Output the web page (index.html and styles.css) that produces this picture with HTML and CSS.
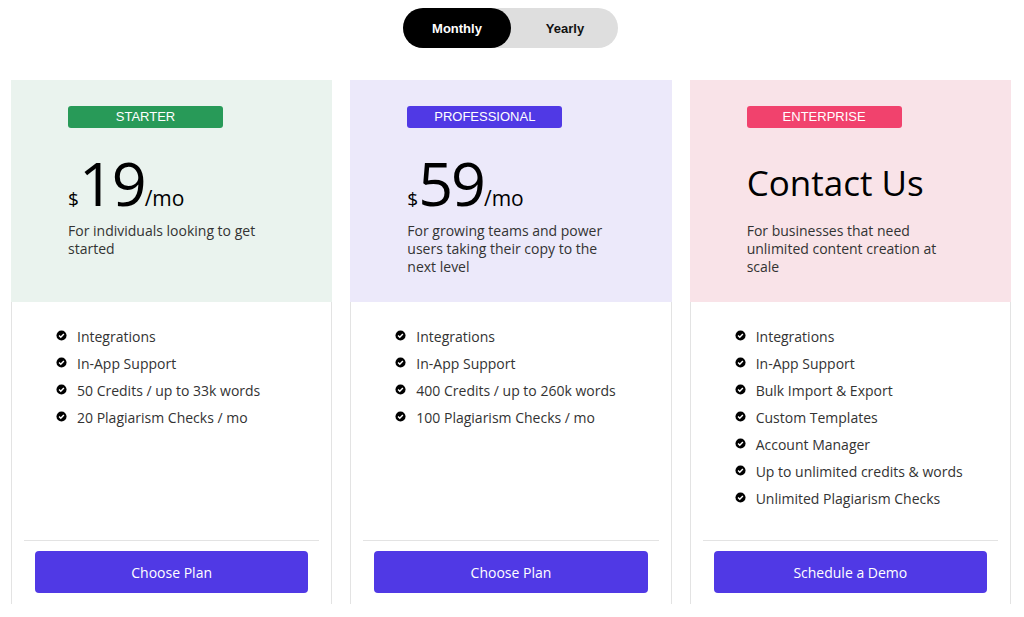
FILE: index.html
```html
<!DOCTYPE html>
<html lang="en">
<head>
    <meta charset="UTF-8">
    <title>Pricing</title>
    <link rel="stylesheet" href="styles.css">
</head>
<body>
    <div class="toggle">
        <button class="toggle-btn active">Monthly</button>
        <button class="toggle-btn">Yearly</button>
    </div>

    <div class="plans">
        <div class="plan starter">
            <div class="plan-head">
                <span class="badge">STARTER</span>
                <div class="price"><span class="cur">$</span><span class="amount">19</span><span class="per">/mo</span></div>
                <p class="desc">For individuals looking to get started</p>
            </div>
            <div class="plan-body">
                <ul class="features">
                    <li><svg class="check" viewBox="0 0 12 12"><circle cx="6" cy="6" r="5.5"/><path d="M3.4 6.1l1.8 1.8 3.4-3.5"/></svg>Integrations</li>
                    <li><svg class="check" viewBox="0 0 12 12"><circle cx="6" cy="6" r="5.5"/><path d="M3.4 6.1l1.8 1.8 3.4-3.5"/></svg>In-App Support</li>
                    <li><svg class="check" viewBox="0 0 12 12"><circle cx="6" cy="6" r="5.5"/><path d="M3.4 6.1l1.8 1.8 3.4-3.5"/></svg>50 Credits / up to 33k words</li>
                    <li><svg class="check" viewBox="0 0 12 12"><circle cx="6" cy="6" r="5.5"/><path d="M3.4 6.1l1.8 1.8 3.4-3.5"/></svg>20 Plagiarism Checks / mo</li>
                </ul>
                <div class="plan-foot">
                    <button class="plan-btn">Choose Plan</button>
                </div>
            </div>
        </div>

        <div class="plan pro">
            <div class="plan-head">
                <span class="badge">PROFESSIONAL</span>
                <div class="price"><span class="cur">$</span><span class="amount">59</span><span class="per">/mo</span></div>
                <p class="desc">For growing teams and power users taking their copy to the next level</p>
            </div>
            <div class="plan-body">
                <ul class="features">
                    <li><svg class="check" viewBox="0 0 12 12"><circle cx="6" cy="6" r="5.5"/><path d="M3.4 6.1l1.8 1.8 3.4-3.5"/></svg>Integrations</li>
                    <li><svg class="check" viewBox="0 0 12 12"><circle cx="6" cy="6" r="5.5"/><path d="M3.4 6.1l1.8 1.8 3.4-3.5"/></svg>In-App Support</li>
                    <li><svg class="check" viewBox="0 0 12 12"><circle cx="6" cy="6" r="5.5"/><path d="M3.4 6.1l1.8 1.8 3.4-3.5"/></svg>400 Credits / up to 260k words</li>
                    <li><svg class="check" viewBox="0 0 12 12"><circle cx="6" cy="6" r="5.5"/><path d="M3.4 6.1l1.8 1.8 3.4-3.5"/></svg>100 Plagiarism Checks / mo</li>
                </ul>
                <div class="plan-foot">
                    <button class="plan-btn">Choose Plan</button>
                </div>
            </div>
        </div>

        <div class="plan enterprise">
            <div class="plan-head">
                <span class="badge">ENTERPRISE</span>
                <div class="contact">Contact Us</div>
                <p class="desc">For businesses that need unlimited content creation at scale</p>
            </div>
            <div class="plan-body">
                <ul class="features">
                    <li><svg class="check" viewBox="0 0 12 12"><circle cx="6" cy="6" r="5.5"/><path d="M3.4 6.1l1.8 1.8 3.4-3.5"/></svg>Integrations</li>
                    <li><svg class="check" viewBox="0 0 12 12"><circle cx="6" cy="6" r="5.5"/><path d="M3.4 6.1l1.8 1.8 3.4-3.5"/></svg>In-App Support</li>
                    <li><svg class="check" viewBox="0 0 12 12"><circle cx="6" cy="6" r="5.5"/><path d="M3.4 6.1l1.8 1.8 3.4-3.5"/></svg>Bulk Import &amp; Export</li>
                    <li><svg class="check" viewBox="0 0 12 12"><circle cx="6" cy="6" r="5.5"/><path d="M3.4 6.1l1.8 1.8 3.4-3.5"/></svg>Custom Templates</li>
                    <li><svg class="check" viewBox="0 0 12 12"><circle cx="6" cy="6" r="5.5"/><path d="M3.4 6.1l1.8 1.8 3.4-3.5"/></svg>Account Manager</li>
                    <li><svg class="check" viewBox="0 0 12 12"><circle cx="6" cy="6" r="5.5"/><path d="M3.4 6.1l1.8 1.8 3.4-3.5"/></svg>Up to unlimited credits &amp; words</li>
                    <li><svg class="check" viewBox="0 0 12 12"><circle cx="6" cy="6" r="5.5"/><path d="M3.4 6.1l1.8 1.8 3.4-3.5"/></svg>Unlimited Plagiarism Checks</li>
                </ul>
                <div class="plan-foot">
                    <button class="plan-btn">Schedule a Demo</button>
                </div>
            </div>
        </div>
    </div>
</body>
</html>
```

FILE: styles.css
```css
body {
    font-family: "Open Sans", sans-serif;
    background: #fff;
    color: #333;
    margin: 0;
    padding: 8px 0 0;
}
.toggle {
    display: flex;
    width: 215px;
    height: 40px;
    margin: 0 0 32px calc(50% - 109px);
    background: #dedede;
    border-radius: 20px;
}
.toggle-btn {
    flex: 0 0 108px;
    border: none;
    background: transparent;
    border-radius: 20px;
    font-family: "Liberation Sans", Arial, sans-serif;
    font-weight: bold;
    font-size: 13px;
    color: #111;
    cursor: pointer;
}
.toggle-btn.active {
    background: #000;
    color: #fff;
}
.plans {
    display: flex;
    gap: 18px;
    padding: 0 13px 0 11px;
}
.plan {
    flex: 1;
    display: flex;
    flex-direction: column;
    height: 524px;
}
.plan-head {
    height: 222px;
    box-sizing: border-box;
    padding: 26px 56px 0 57px;
}
.starter .plan-head { background: #eaf3ee; }
.pro .plan-head { background: #ece9fa; }
.enterprise .plan-head { background: #f9e3e8; }
.badge {
    display: block;
    width: 155px;
    height: 22px;
    line-height: 22px;
    text-align: center;
    border-radius: 3px;
    color: #fff;
    font-family: "Liberation Sans", Arial, sans-serif;
    font-size: 13px;
}
.starter .badge { background: #289a58; }
.pro .badge { background: #5039e5; }
.enterprise .badge { background: #f1426d; }
.price {
    display: flex;
    align-items: baseline;
    height: 66px;
    margin-top: 22px;
    color: #000;
}
.cur {
    font-size: 19px;
}
.amount {
    font-size: 61px;
    line-height: 66px;
    letter-spacing: -2px;
}
.per {
    font-size: 21px;
}
.contact {
    height: 66px;
    line-height: 66px;
    margin-top: 22px;
    font-size: 35px;
    color: #000;
}
.desc {
    margin: 6px 0 0;
    max-width: 200px;
    font-size: 14px;
    line-height: 18px;
    color: #333;
}
.plan-body {
    flex: 1;
    display: flex;
    flex-direction: column;
    border-left: 1px solid #e3e3e3;
    border-right: 1px solid #e3e3e3;
}
.features {
    flex: 1;
    list-style: none;
    margin: 0;
    padding: 21px 0 0 44px;
}
.features li {
    display: flex;
    align-items: center;
    height: 27px;
    font-size: 14px;
    color: #333;
}
.check {
    width: 11px;
    height: 11px;
    margin: -3px 10px 0 0;
}
.check circle {
    fill: #000;
}
.check path {
    fill: none;
    stroke: #fff;
    stroke-width: 1.6;
}
.plan-foot {
    margin: 0 12px;
    padding: 10px 11px 11px;
    border-top: 1px solid #e3e3e3;
}
.plan-btn {
    display: block;
    width: 100%;
    height: 42px;
    border: none;
    border-radius: 4px;
    background: #5039e5;
    color: #fff;
    font-family: "Open Sans", sans-serif;
    font-size: 14px;
    cursor: pointer;
}
```
